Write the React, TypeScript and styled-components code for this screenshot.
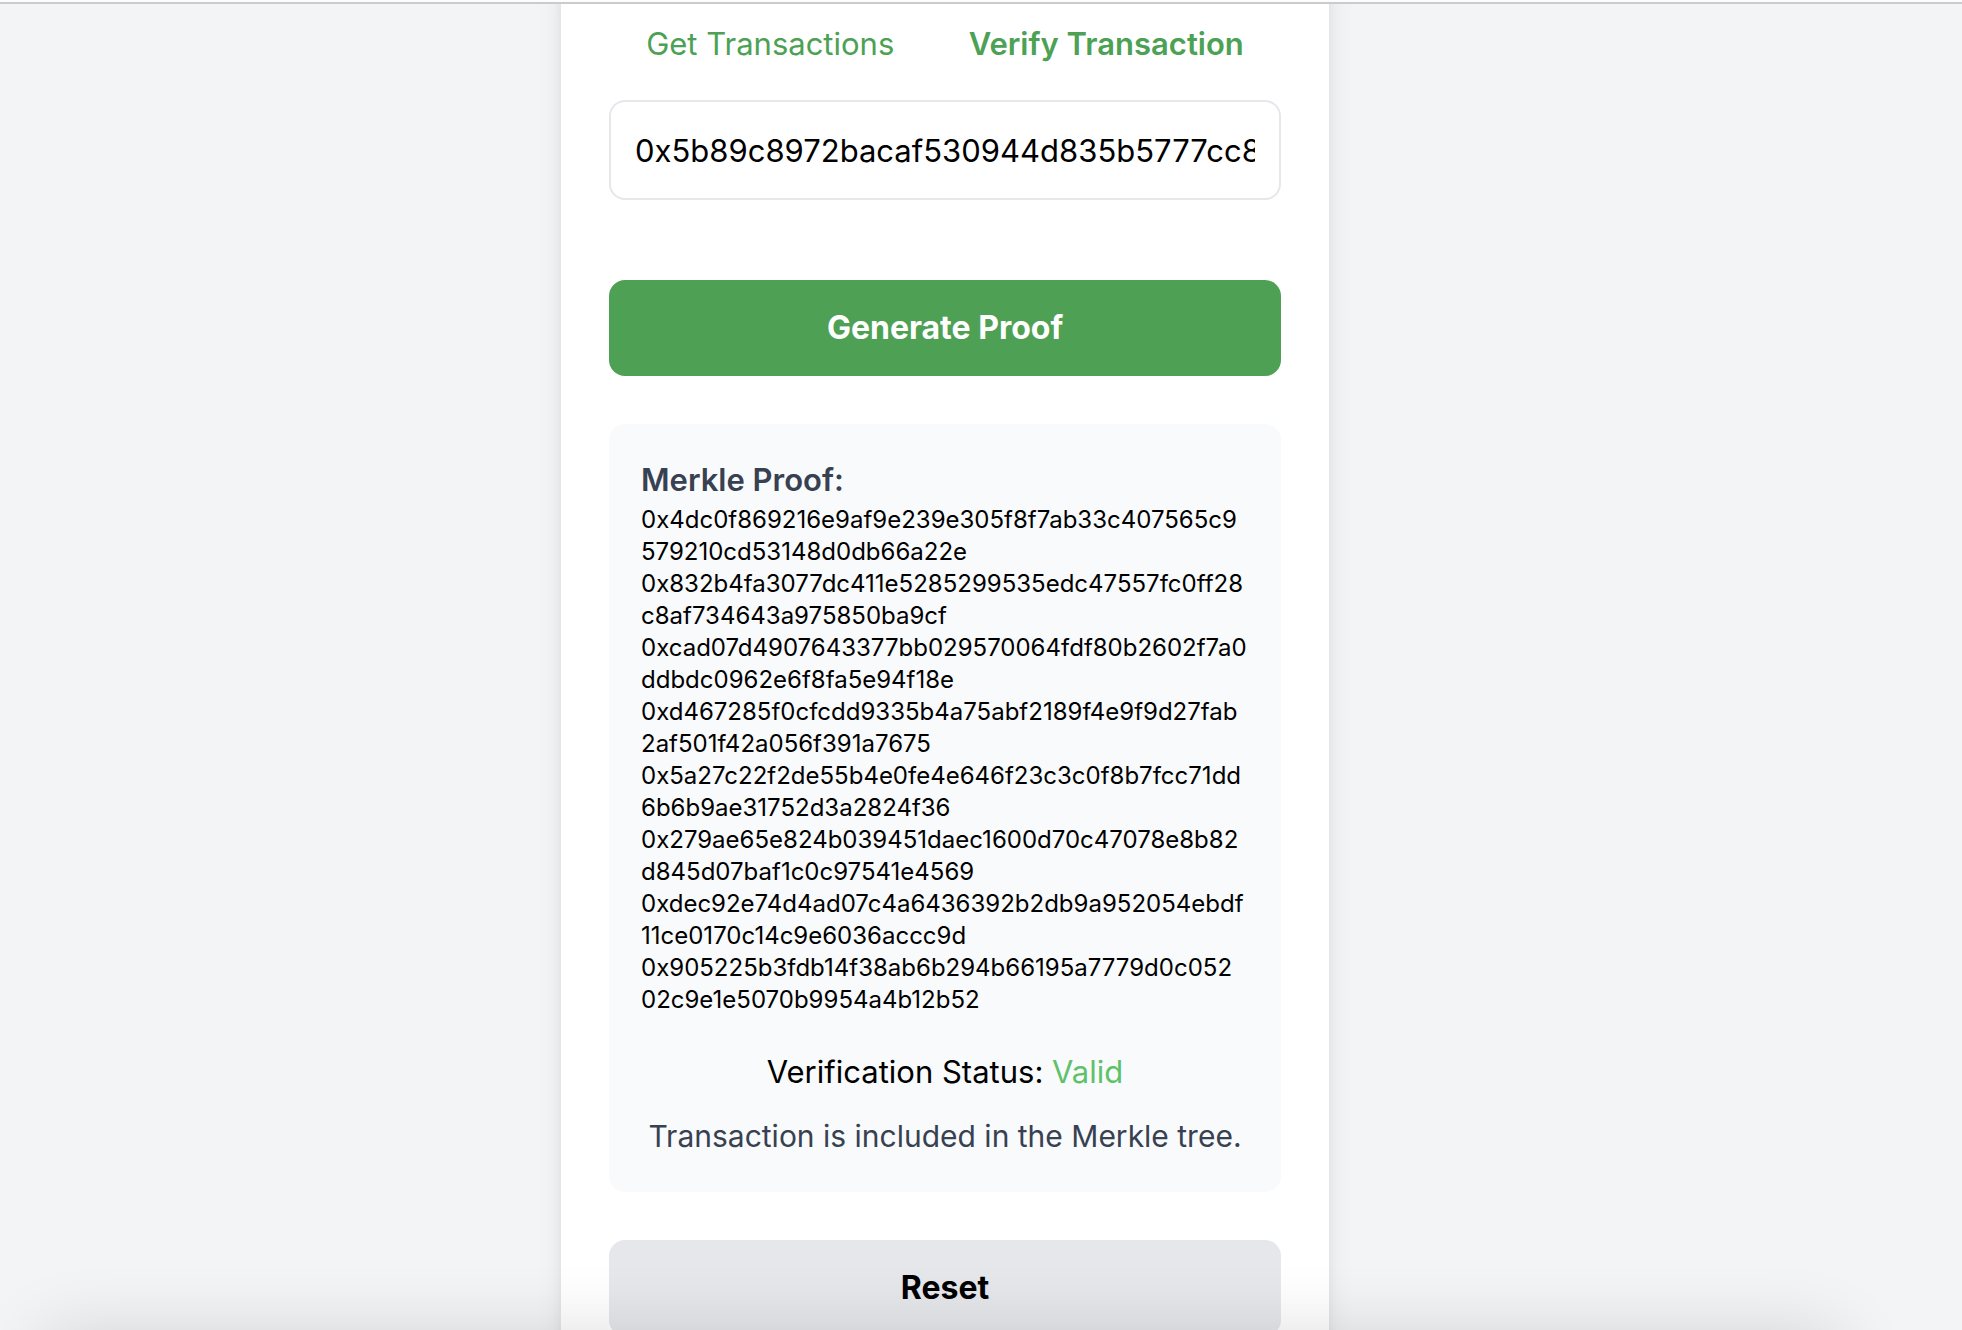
import React, { useState } from "react";
import styled, { createGlobalStyle } from "styled-components";

const GlobalStyle = createGlobalStyle`
  *, *::before, *::after { box-sizing: border-box; }
  body {
    margin: 0;
    background: #f3f4f6;
    color: #000;
    font-family: Inter, "Liberation Sans", sans-serif;
    font-size: 31px;
    line-height: 48px;
  }
  button, input { font: inherit; color: inherit; }
`;

const Page = styled.div`
  display: flex;
  flex-direction: column;
  height: 100vh;
  overflow: hidden;
`;

const WindowEdge = styled.div`
  flex: none;
  height: 4px;
  background: #fdfdfd;
  border-bottom: 2px solid #c9cccb;
`;

const Viewport = styled.main`
  flex: 1;
  min-height: 0;
  padding-right: 72px;
  overflow: hidden;
`;

const Card = styled.section`
  width: 100%;
  max-width: 768px;
  margin: -48px auto 0;
  padding: 64px 48px 48px;
  background: #fff;
  box-shadow: 0 20px 30px -6px rgba(0, 0, 0, 0.1), 0 8px 12px -4px rgba(0, 0, 0, 0.1);
`;

const Tabs = styled.nav`
  display: flex;
  justify-content: space-around;
  margin-bottom: 32px;
`;

const Tab = styled.button<{ $active: boolean }>`
  padding: 0;
  border: 0;
  background: none;
  color: #4ca154;
  font-weight: ${(p) => (p.$active ? 600 : 400)};
  cursor: pointer;
`;

const HashInput = styled.input`
  display: block;
  width: 100%;
  height: 100px;
  margin-bottom: 80px;
  padding: 24px;
  border: 2px solid #e5e7eb;
  border-radius: 16px;
  background: #fff;
  outline: none;
`;

const ActionButton = styled.button<{ $primary?: boolean }>`
  display: block;
  width: 100%;
  padding: 24px;
  border: 0;
  border-radius: 16px;
  background: ${(p) => (p.$primary ? "#4ea154" : "#e5e7eb")};
  color: ${(p) => (p.$primary ? "#fff" : "#000")};
  font-size: 32px;
  font-weight: 700;
  cursor: pointer;
`;

const Result = styled.section`
  margin: 48px 0;
  padding: 32px;
  border-radius: 16px;
  background: #f9fafb;
`;

const ResultTitle = styled.h2`
  margin: 0;
  color: #374151;
  font-size: 31px;
  font-weight: 600;
`;

const ProofList = styled.ul`
  margin: 0 0 32px;
  padding: 0;
  list-style: none;
  font-size: 24px;
  line-height: 32px;
  white-space: pre-line;
  word-break: break-all;
`;

const Status = styled.p`
  margin: 0 0 16px;
  text-align: center;
`;

const StatusValue = styled.span`
  color: #5fc26b;
`;

const Message = styled.p`
  margin: 0;
  color: #374151;
  font-size: 30px;
  text-align: center;
`;

const BottomShade = styled.div`
  position: fixed;
  top: calc(100% + 4px);
  left: 44px;
  right: 124px;
  height: 200px;
  box-shadow: 0 0 72px rgba(0, 0, 0, 0.14);
  pointer-events: none;
`;

const proof = [
  "0x4dc0f869216e9af9e239e305f8f7ab33c407565c9\n579210cd53148d0db66a22e",
  "0x832b4fa3077dc411e5285299535edc47557fc0ff28\nc8af734643a975850ba9cf",
  "0xcad07d4907643377bb029570064fdf80b2602f7a0\nddbdc0962e6f8fa5e94f18e",
  "0xd467285f0cfcdd9335b4a75abf2189f4e9f9d27fab\n2af501f42a056f391a7675",
  "0x5a27c22f2de55b4e0fe4e646f23c3c0f8b7fcc71dd\n6b6b9ae31752d3a2824f36",
  "0x279ae65e824b039451daec1600d70c47078e8b82\nd845d07baf1c0c97541e4569",
  "0xdec92e74d4ad07c4a6436392b2db9a952054ebdf\n11ce0170c14c9e6036accc9d",
  "0x905225b3fdb14f38ab6b294b66195a7779d0c052\n02c9e1e5070b9954a4b12b52",
];

const tabs = ["Get Transactions", "Verify Transaction"];

export default function App() {
  const [active, setActive] = useState(tabs[1]);
  const [hash, setHash] = useState("0x5b89c8972bacaf530944d835b5777cc8");

  return (
    <Page>
      <GlobalStyle />
      <WindowEdge />
      <Viewport>
        <Card>
          <Tabs>
            {tabs.map((name) => (
              <Tab key={name} type="button" $active={name === active} onClick={() => setActive(name)}>
                {name}
              </Tab>
            ))}
          </Tabs>
          <HashInput
            type="text"
            aria-label="Transaction hash"
            value={hash}
            onChange={(e) => setHash(e.target.value)}
          />
          <ActionButton type="button" $primary>
            Generate Proof
          </ActionButton>
          <Result>
            <ResultTitle>Merkle Proof:</ResultTitle>
            <ProofList>
              {proof.map((item) => (
                <li key={item}>{item}</li>
              ))}
            </ProofList>
            <Status>
              Verification Status: <StatusValue>Valid</StatusValue>
            </Status>
            <Message>Transaction is included in the Merkle tree.</Message>
          </Result>
          <ActionButton type="button">Reset</ActionButton>
        </Card>
      </Viewport>
      <BottomShade />
    </Page>
  );
}
